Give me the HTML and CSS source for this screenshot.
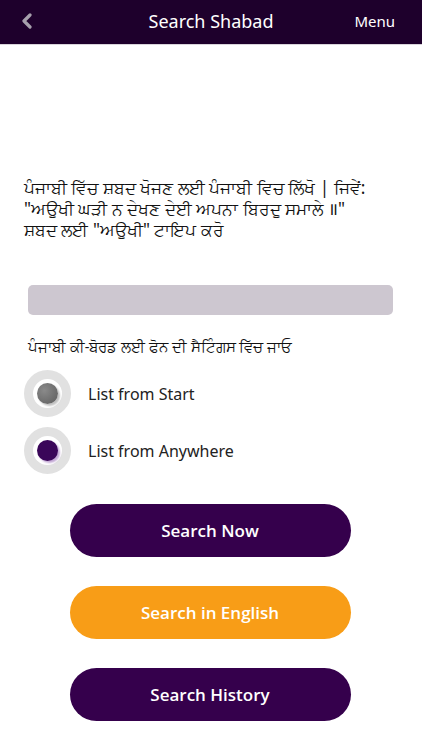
FILE: index.html
```html
<!DOCTYPE html>
<html lang="pa">

<head>
  <meta charset="UTF-8">
  <meta name="viewport" content="width=device-width, initial-scale=1.0">
  <title>Search Shabad</title>
  <link rel="stylesheet" href="styles.css">
</head>

<body>
  <div class="topbar">
    <span class="back">
      <svg width="12" height="16" viewBox="0 0 12 16">
        <path d="M9 2 L3 8 L9 14" fill="none" stroke="#a7a0ad" stroke-width="3.2" stroke-linecap="round" stroke-linejoin="round" />
      </svg>
    </span>
    <h1 class="title">Search Shabad</h1>
    <span class="menu">Menu</span>
  </div>

  <div class="content">
    <p class="help">ਪੰਜਾਬੀ ਵਿੱਚ ਸ਼ਬਦ ਖੋਜਣ ਲਈ ਪੰਜਾਬੀ ਵਿਚ ਲਿੱਖੋ | ਜਿਵੇਂ:<br>"ਅਉਖੀ ਘੜੀ ਨ ਦੇਖਣ ਦੇਈ ਅਪਨਾ ਬਿਰਦੁ ਸਮਾਲੇ ॥"<br>ਸ਼ਬਦ ਲਈ "ਅਉਖੀ" ਟਾਇਪ ਕਰੋ</p>

    <input type="text" class="search-box">

    <p class="keyboard">ਪੰਜਾਬੀ ਕੀ-ਬੋਰਡ ਲਈ ਫੋਨ ਦੀ ਸੈਟਿੰਗਸ ਵਿੱਚ ਜਾਓ</p>

    <div class="options">
      <label class="option">
        <span class="radio"><span class="dot"></span></span>
        List from Start
      </label>
      <label class="option">
        <span class="radio"><span class="dot on"></span></span>
        List from Anywhere
      </label>
    </div>

    <div class="buttons">
      <button class="btn purple">Search Now</button>
      <button class="btn orange">Search in English</button>
      <button class="btn purple">Search History</button>
    </div>
  </div>
</body>

</html>
```

FILE: styles.css
```css
* {
  margin: 0;
  padding: 0;
  box-sizing: border-box;
}

body {
  width: 422px;
  height: 750px;
  background: #fff;
  font-family: "Noto Sans", "Open Sans", sans-serif;
  color: #111;
  overflow: hidden;
}

.topbar {
  height: 45px;
  background: #1e002c;
  border-bottom: 1px solid #d8d4da;
  display: flex;
  align-items: center;
}

.back {
  width: 80px;
  padding-left: 21px;
  display: flex;
  align-items: center;
  margin-top: -2px;
}

.title {
  flex: 1;
  text-align: center;
  font-size: 18px;
  font-weight: normal;
  color: #fff;
  margin-top: -3px;
}

.menu {
  width: 80px;
  padding-right: 27px;
  text-align: right;
  font-size: 15px;
  color: #fff;
  margin-top: -3px;
}

.content {
  padding: 132px 24px 0;
}

.help {
  font-size: 17.2px;
  line-height: 21px;
  color: #111;
  white-space: nowrap;
}

.search-box {
  display: block;
  width: 365px;
  height: 30px;
  margin: 45px 0 0 4px;
  border: none;
  border-radius: 5px;
  background: #cdc7d0;
  outline: none;
}

.keyboard {
  margin: 20px 0 0 4px;
  font-size: 14.5px;
  line-height: 22px;
}

.options {
  margin-top: 13px;
  display: flex;
  flex-direction: column;
  gap: 10px;
}

.option {
  display: flex;
  align-items: center;
  gap: 17px;
  font-size: 16px;
  color: #222;
}

.radio {
  width: 47px;
  height: 47px;
  border-radius: 50%;
  border: 9px solid #e1e1e1;
  background: #fff;
  display: flex;
  align-items: center;
  justify-content: center;
}

.dot {
  width: 21px;
  height: 21px;
  border-radius: 50%;
  background: radial-gradient(circle at 35% 35%, #8a8a8a, #5c5c5c);
  box-shadow: 2px 2px 2px rgba(0, 0, 0, 0.25);
}

.dot.on {
  background: #3a0659;
  box-shadow: 2px 2px 2px rgba(120, 60, 160, 0.45);
}

.buttons {
  margin-top: 30px;
  display: flex;
  flex-direction: column;
  align-items: center;
  gap: 29px;
}

.btn {
  width: 281px;
  height: 53px;
  border: none;
  border-radius: 27px;
  font-family: "Open Sans", "Noto Sans", sans-serif;
  font-size: 17px;
  font-weight: 600;
  color: #fff;
  margin-left: -2px;
}

.purple {
  background: #35004c;
}

.orange {
  background: #f89d17;
}
```
